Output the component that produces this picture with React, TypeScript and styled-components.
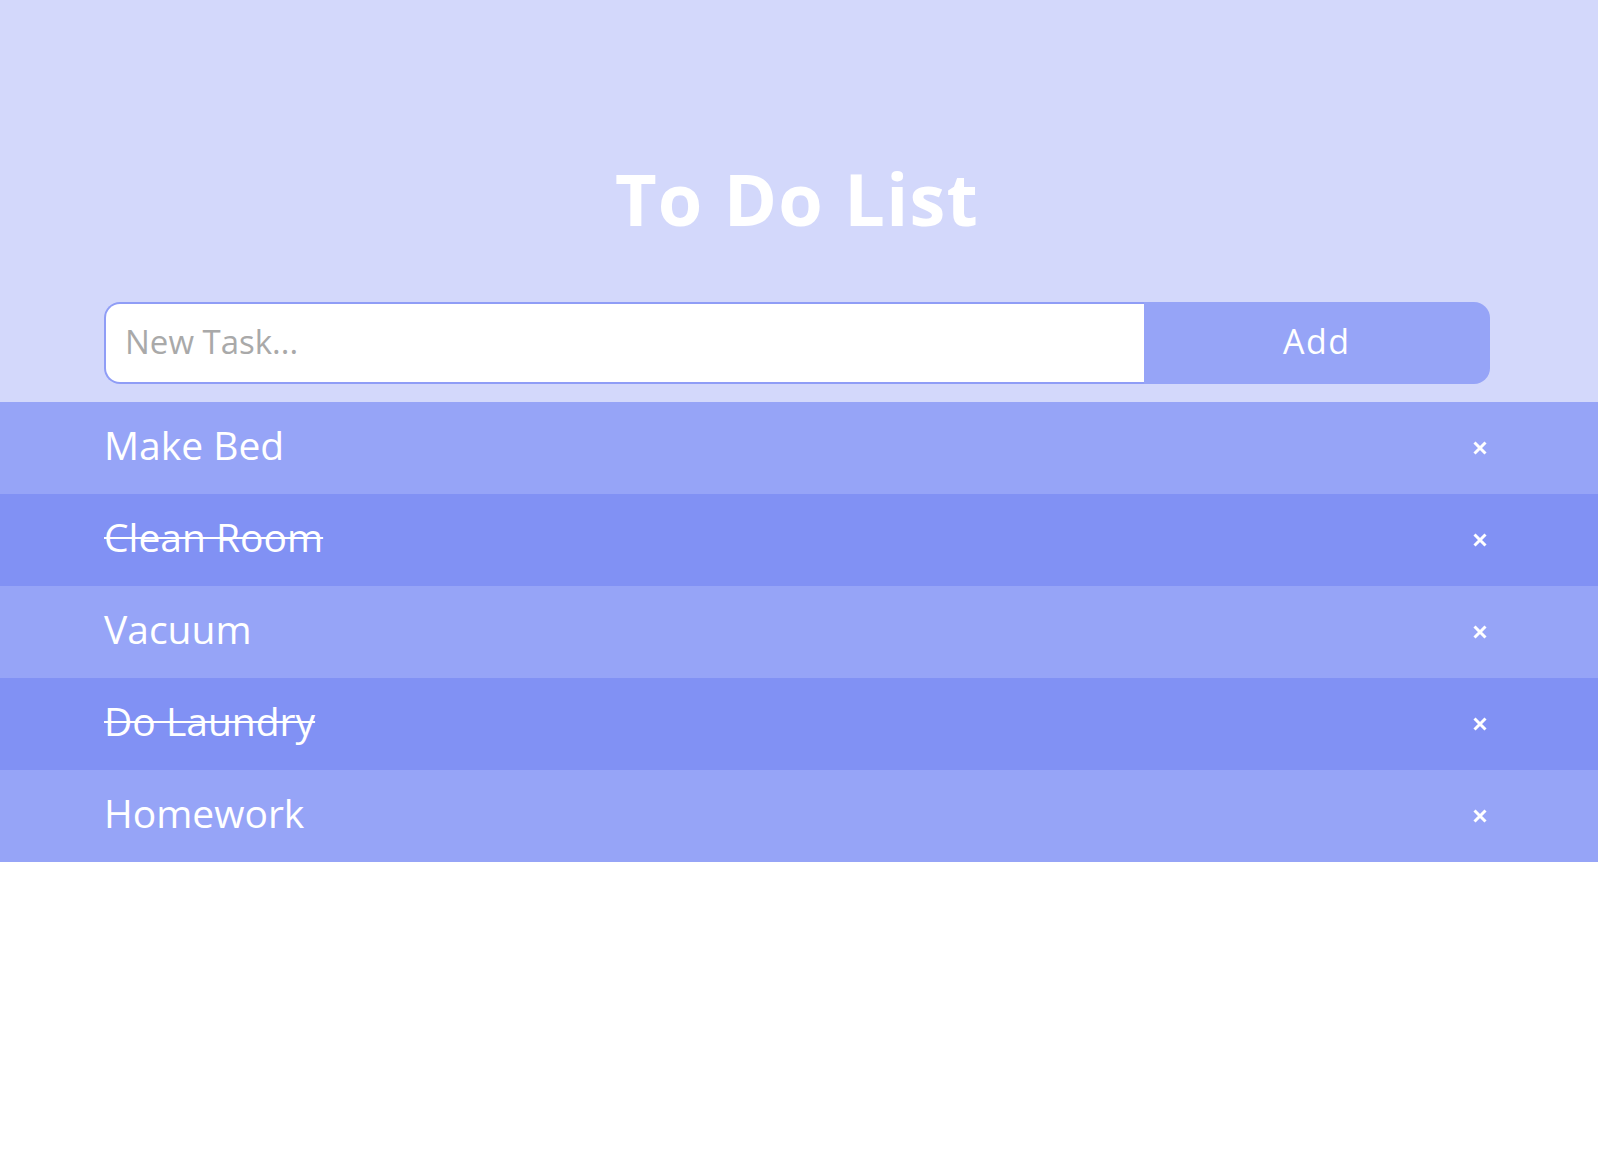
import React, { useState } from "react";
import styled, { createGlobalStyle } from "styled-components";

const GlobalStyle = createGlobalStyle`
  html, body {
    margin: 0;
    padding: 0;
    background: #ffffff;
    font-family: "Open Sans", "Liberation Sans", sans-serif;
  }
  * { box-sizing: border-box; }
`;

const Header = styled.header`
  background: #d3d8fb;
  padding: 162px 108px 18px 104px;
  display: flex;
  flex-direction: column;
  align-items: stretch;
`;

const Title = styled.h1`
  margin: 0 0 68px 0;
  font-family: "Open Sans", "Liberation Sans", sans-serif;
  font-weight: 700;
  font-size: 72px;
  line-height: 72px;
  letter-spacing: 1.3px;
  color: #ffffff;
  text-align: center;
`;

const Form = styled.form`
  display: flex;
  height: 82px;
  width: 1386px;
`;

const TaskInput = styled.input`
  flex: 0 0 75%;
  width: 75%;
  min-width: 0;
  height: 100%;
  border: 2px solid #8f9df6;
  border-right: none;
  border-radius: 16px 0 0 16px;
  background: #ffffff;
  padding: 0 0 4px 19px;
  font-family: "Open Sans", "Liberation Sans", sans-serif;
  font-size: 33px;
  color: #555;
  outline: none;
  &::placeholder {
    color: #a9a9a9;
  }
`;

const AddButton = styled.button`
  flex: 0 0 25%;
  width: 25%;
  height: 100%;
  border: none;
  border-radius: 0 16px 16px 0;
  background: #96a4f7;
  color: #ffffff;
  font-family: "Open Sans", "Liberation Sans", sans-serif;
  font-size: 34px;
  letter-spacing: 1.5px;
  cursor: pointer;
  padding: 0 0 4px 0;
`;

const List = styled.ul`
  list-style: none;
  margin: 0;
  padding: 0;
`;

const Item = styled.li<{ $dark: boolean }>`
  height: 92px;
  background: ${(p) => (p.$dark ? "#8191f4" : "#96a4f7")};
  display: flex;
  align-items: center;
  justify-content: space-between;
  padding: 0 111px 0 104px;
`;

const ItemText = styled.span<{ $done: boolean }>`
  font-family: "Open Sans", "Liberation Sans", sans-serif;
  font-size: 39px;
  color: #ffffff;
  margin-bottom: 7px;
  text-decoration: ${(p) => (p.$done ? "line-through" : "none")};
  text-decoration-thickness: 2px;
  cursor: pointer;
`;

const DeleteButton = styled.button`
  background: none;
  border: none;
  padding: 0;
  width: 14px;
  height: 14px;
  display: flex;
  align-items: center;
  justify-content: center;
  cursor: pointer;
`;

type Task = { text: string; done: boolean };

const initial: Task[] = [
  { text: "Make Bed", done: false },
  { text: "Clean Room", done: true },
  { text: "Vacuum", done: false },
  { text: "Do Laundry", done: true },
  { text: "Homework", done: false },
];

export default function App() {
  const [tasks, setTasks] = useState<Task[]>(initial);
  const [value, setValue] = useState("");

  const add = (e: React.FormEvent) => {
    e.preventDefault();
    if (!value.trim()) return;
    setTasks([...tasks, { text: value.trim(), done: false }]);
    setValue("");
  };

  return (
    <>
      <GlobalStyle />
      <Header>
        <Title>To Do List</Title>
        <Form onSubmit={add}>
          <TaskInput
            placeholder="New Task..."
            value={value}
            onChange={(e) => setValue(e.target.value)}
          />
          <AddButton type="submit">Add</AddButton>
        </Form>
      </Header>
      <List>
        {tasks.map((t, i) => (
          <Item key={i} $dark={i % 2 === 1}>
            <ItemText
              $done={t.done}
              onClick={() =>
                setTasks(tasks.map((x, j) => (j === i ? { ...x, done: !x.done } : x)))
              }
            >
              {t.text}
            </ItemText>
            <DeleteButton
              aria-label="Delete"
              onClick={() => setTasks(tasks.filter((_, j) => j !== i))}
            >
              <svg width="14" height="14" viewBox="0 0 14 14">
                <path d="M1.5 1.5 L12.5 12.5 M12.5 1.5 L1.5 12.5" stroke="#ffffff" strokeWidth="3" strokeLinecap="butt" />
              </svg>
            </DeleteButton>
          </Item>
        ))}
      </List>
    </>
  );
}
